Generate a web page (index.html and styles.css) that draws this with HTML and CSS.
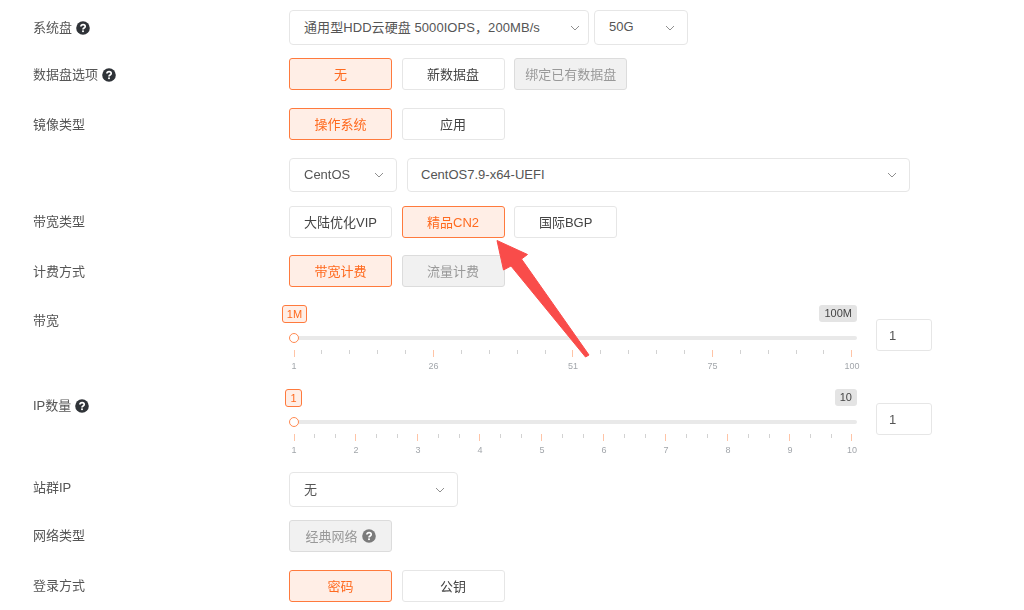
FILE: index.html
```html
<!DOCTYPE html>
<html lang="zh">
<head>
<meta charset="utf-8">
<title>配置</title>
<link rel="stylesheet" href="styles.css">
</head>
<body>
<svg class="defs" width="0" height="0"><symbol id="help" viewBox="0 0 14 14"><circle cx="7" cy="7" r="6.8" fill="currentColor"/><path d="M4.9 5.5C5 4.3 5.9 3.6 7.1 3.6c1.2 0 2.1.8 2.1 1.8 0 1.7-2.2 1.6-2.2 3.1" fill="none" stroke="#fff" stroke-width="1.7"/><rect x="6.1" y="9.4" width="1.8" height="1.7" fill="#fff"/></symbol><symbol id="chev" viewBox="0 0 10 6"><path d="M1 1l4 4 4-4" fill="none" stroke="currentColor" stroke-width="1"/></symbol></svg>
<main class="form">
  <div class="row r1">
    <div class="label">系统盘 <svg class="help"><use href="#help"/></svg></div>
    <div class="ctl">
      <div class="select w300"><span class="wide">通用型HDD云硬盘 5000IOPS，200MB/s</span><svg class="chev"><use href="#chev"/></svg></div>
      <div class="select w94"><span>50G</span><svg class="chev"><use href="#chev"/></svg></div>
    </div>
  </div>
  <div class="row r2">
    <div class="label">数据盘选项 <svg class="help"><use href="#help"/></svg></div>
    <div class="ctl gap">
      <div class="btn on">无</div><div class="btn">新数据盘</div><div class="btn off">绑定已有数据盘</div>
    </div>
  </div>
  <div class="row r3">
    <div class="label">镜像类型</div>
    <div class="ctl gap"><div class="btn on">操作系统</div><div class="btn">应用</div></div>
  </div>
  <div class="row r4">
    <div class="label"></div>
    <div class="ctl">
      <div class="select w108"><span>CentOS</span><svg class="chev"><use href="#chev"/></svg></div>
      <div class="select w504"><span>CentOS7.9-x64-UEFI</span><svg class="chev"><use href="#chev"/></svg></div>
    </div>
  </div>
  <div class="row r5">
    <div class="label">带宽类型</div>
    <div class="ctl gap"><div class="btn">大陆优化VIP</div><div class="btn on">精品CN2</div><div class="btn">国际BGP</div></div>
  </div>
  <div class="row r6">
    <div class="label">计费方式</div>
    <div class="ctl gap"><div class="btn on">带宽计费</div><div class="btn off">流量计费</div></div>
  </div>
  <div class="row r7">
    <div class="label lab-s">带宽</div>
    <div class="slider">
      <div class="tips"><span class="tip cur t1m">1M</span><span class="tip max">100M</span></div>
      <div class="track"><i class="handle"></i></div>
      <div class="ticks">
        <i class="M"></i><i></i><i></i><i></i><i></i><i class="M"></i><i></i><i></i><i></i><i></i><i class="M"></i><i></i><i></i><i></i><i></i><i class="M"></i><i></i><i></i><i></i><i></i><i class="M"></i>
      </div>
      <div class="nums"><b>1</b><b>26</b><b>51</b><b>75</b><b>100</b></div>
    </div>
    <div class="num">1</div>
  </div>
  <div class="row r8">
    <div class="label lab-s">IP数量 <svg class="help"><use href="#help"/></svg></div>
    <div class="slider">
      <div class="tips"><span class="tip cur t1">1</span><span class="tip max">10</span></div>
      <div class="track"><i class="handle"></i></div>
      <div class="ticks">
        <i class="M"></i><i></i><i></i><i class="M"></i><i></i><i></i><i class="M"></i><i></i><i></i><i class="M"></i><i></i><i></i><i class="M"></i><i></i><i></i><i class="M"></i><i></i><i></i><i class="M"></i><i></i><i></i><i class="M"></i><i></i><i></i><i class="M"></i><i></i><i></i><i class="M"></i>
      </div>
      <div class="nums"><b>1</b><b>2</b><b>3</b><b>4</b><b>5</b><b>6</b><b>7</b><b>8</b><b>9</b><b>10</b></div>
    </div>
    <div class="num">1</div>
  </div>
  <div class="row r9">
    <div class="label">站群IP</div>
    <div class="ctl"><div class="select w169"><span>无</span><svg class="chev"><use href="#chev"/></svg></div></div>
  </div>
  <div class="row r10">
    <div class="label">网络类型</div>
    <div class="ctl gap"><div class="btn off">经典网络 <svg class="help"><use href="#help"/></svg></div></div>
  </div>
  <div class="row r11">
    <div class="label">登录方式</div>
    <div class="ctl gap"><div class="btn on">密码</div><div class="btn">公钥</div></div>
  </div>
</main>
<svg class="arrow" width="1024" height="610" viewBox="0 0 1024 610"><path d="M497 240.5L527.5 254.5 521.5 259 589 355 585.5 357 511 266 503.5 270z" fill="#f94c4a" stroke="#f94c4a" stroke-width="1" stroke-linejoin="round"/></svg>
</body>
</html>
```
FILE: styles.css
```css
* { box-sizing: border-box; }
html, body { margin: 0; height: 610px; overflow: hidden; background: #fff; }
body { font-family: "Liberation Sans", "Noto Sans CJK SC", sans-serif; font-size: 13px; color: #555; position: relative; }
.defs { position: absolute; }
.form { padding: 10px 0 0 33px; filter: blur(0.3px); }
.row { display: flex; align-items: flex-start; }
.label { width: 256px; flex: none; display: flex; align-items: center; gap: 4px; height: 32px; line-height: 32px; color: #555; }
.r1 .label { height: 35px; }
.r2 .label, .r3 .label, .r6 .label { padding-top: 1px; }
.ctl { display: flex; gap: 5px; }
.ctl.gap { gap: 9.6px; }
.r2 { margin-top: 13px; }
.r3 { margin-top: 18px; }
.r4 { margin-top: 18px; }
.r4 .ctl { gap: 10px; }
.r5 { margin-top: 14px; }
.r6 { margin-top: 17px; }
.r7 { margin-top: 18px; }
.r8 { margin-top: 18px; }
.r8 .label { padding-top: 1px; }
.r9 { margin-top: 17px; }
.r10 { margin-top: 13px; }
.r11 { margin-top: 18px; }
.help { width: 14px; height: 14px; color: #2f3338; flex: none; }
.select { height: 35px; border: 1px solid #e6e6e6; border-radius: 4px; background: #fff; padding: 0 10px 2px 14px; display: flex; align-items: center; justify-content: space-between; color: #555; }
.wide { letter-spacing: 0.07px; }
.r4 .select { height: 34px; }
.w300 { width: 300px; padding-right: 8px; }
.w94 { width: 94px; padding-right: 12px; }
.w108 { width: 108px; padding-right: 12px; }
.w504 { width: 503px; padding-left: 13px; padding-right: 12px; }
.w169 { width: 169px; padding-right: 12px; }
.chev { width: 10px; height: 6px; color: #8f8f8f; margin-top: 2px; }
.btn { min-width: 103px; height: 32px; padding: 0 13px 2px; border: 1px solid #e6e6e6; border-radius: 3px; display: flex; align-items: center; justify-content: center; gap: 4px; background: #fff; color: #444; white-space: nowrap; }
.btn.on { background: #ffeee6; border-color: #ff7a3d; color: #ff6a1f; }
.btn.off { background: #f1f1f1; border-color: #dcdcdc; color: #999; padding: 0 10px 2px; }
.btn.off .help { color: #7b7b7b; margin-top: 2px; }
.lab-s { height: 32px; }
.slider { width: 568px; flex: none; }
.tips { display: flex; justify-content: space-between; align-items: flex-start; height: 18px; font-size: 11px; }
.tip { display: block; height: 18px; line-height: 16px; border-radius: 3px; padding: 0 4px; text-align: center; }
.tip.cur { background: #ffeee6; border: 1px solid #ff7a3d; color: #ff6a1f; }
.tip.max { background: #e4e4e4; color: #444; height: 17px; line-height: 17px; padding: 0 5px; }
.t1m { width: 25px; margin-left: -7px; padding: 0 !important; }
.t1 { width: 17px; margin-left: -4px; padding: 0 !important; }
.track { position: relative; height: 4px; margin: 13px 0 0 5px; background: #e9e9e9; border-radius: 2px; }
.handle { position: absolute; left: -5px; top: -3px; width: 10px; height: 10px; border-radius: 50%; border: 1.5px solid #ff8a52; background: #fff; }
.ticks { display: flex; justify-content: space-between; align-items: flex-start; width: 559px; margin: 10px 0 0 4.5px; height: 7px; }
.ticks i { width: 1px; height: 4px; background: #d2d2d2; }
.ticks i.M { height: 7px; background: #ffc4a6; }
.nums { display: flex; justify-content: space-between; width: 559px; margin: 4px 0 0 4.5px; font-size: 9px; line-height: 10px; color: #a2a6ab; }
.nums b { width: 1px; display: flex; justify-content: center; font-weight: 400; white-space: nowrap; }
.num { width: 56px; height: 32px; margin: 14px 0 0 19px; border: 1px solid #e6e6e6; border-radius: 3px; padding-left: 12px; line-height: 31px; color: #555; }
.arrow { position: absolute; left: 0; top: 0; pointer-events: none; }
```
